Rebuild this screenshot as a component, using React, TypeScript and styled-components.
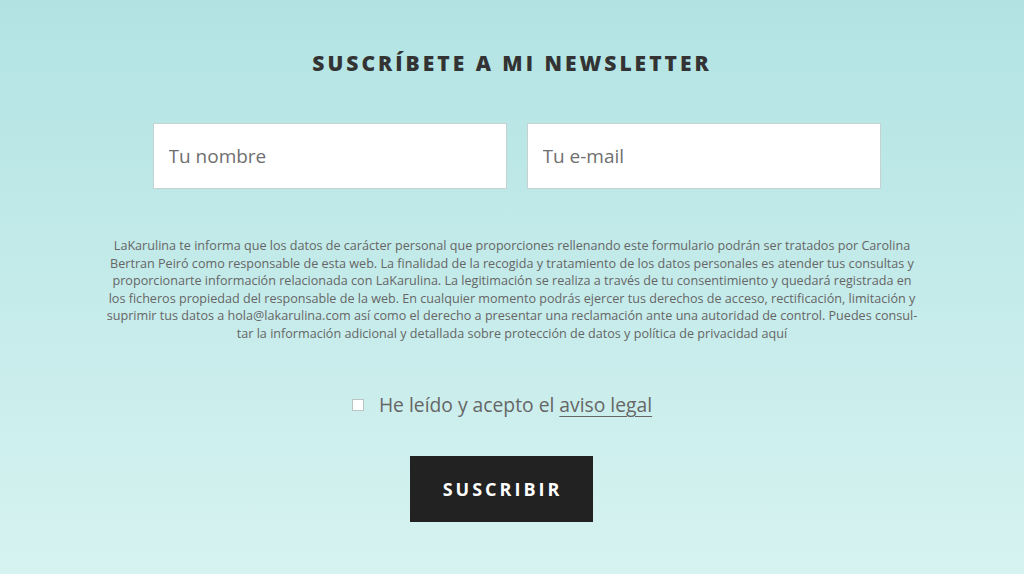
import React from "react";
import styled, { createGlobalStyle } from "styled-components";

const GlobalStyle = createGlobalStyle`
	html, body {
		margin: 0;
		padding: 0;
	}
	body {
		font-family: "Open Sans", "Liberation Sans", sans-serif;
	}
`;

const Page = styled.div`
	width: 1024px;
	height: 574px;
	box-sizing: border-box;
	background: linear-gradient(180deg, #b2e3e3 0%, #d6f3f1 100%);
	display: flex;
	flex-direction: column;
	align-items: center;
	padding-top: 49px;
`;

const Title = styled.h2`
	margin: 0;
	font-family: "Open Sans", "Liberation Sans", sans-serif;
	font-weight: 800;
	font-size: 21px;
	letter-spacing: 3px;
	color: #333;
	line-height: 28px;
`;

const Fields = styled.div`
	display: flex;
	gap: 20px;
	margin-top: 46px;
	margin-left: 9px;
`;

const Input = styled.input`
	width: 354px;
	height: 66px;
	box-sizing: border-box;
	border: 1px solid #c6d2d2;
	background: #fff;
	padding: 0 15px;
	font-family: "Open Sans", "Liberation Sans", sans-serif;
	font-size: 19px;
	color: #555;
	outline: none;
	&::placeholder {
		color: #6f6f6f;
	}
`;

const Legal = styled.p`
	margin: 48px 0 0;
	white-space: nowrap;
	text-align: center;
	font-family: "Open Sans", "Liberation Sans", sans-serif;
	font-size: 12.6px;
	line-height: 17.6px;
	color: #666;
`;

const Consent = styled.label`
	display: flex;
	align-items: center;
	gap: 15px;
	margin-top: 50px;
	margin-right: 20px;
	font-size: 19.3px;
	color: #666;
	line-height: 24px;
`;

const Box = styled.span`
	width: 10px;
	height: 10px;
	border: 1px solid #b9c4c4;
	background: #fff;
`;

const Link = styled.a`
	color: #666;
	text-decoration: underline;
	text-underline-offset: 4px;
	text-decoration-thickness: 1px;
`;

const Button = styled.button`
	margin-top: 39px;
	margin-right: 22px;
	width: 183px;
	height: 66px;
	border: none;
	background: #222;
	color: #fff;
	font-family: "Open Sans", "Liberation Sans", sans-serif;
	font-weight: 700;
	font-size: 18px;
	letter-spacing: 3px;
	padding: 0 0 0 3px;
	cursor: pointer;
`;

const legalLines = [
	"LaKarulina te informa que los datos de carácter personal que proporciones rellenando este formulario podrán ser tratados por Carolina",
	"Bertran Peiró como responsable de esta web. La finalidad de la recogida y tratamiento de los datos personales es atender tus consultas y",
	"proporcionarte información relacionada con LaKarulina. La legitimación se realiza a través de tu consentimiento y quedará registrada en",
	"los ficheros propiedad del responsable de la web. En cualquier momento podrás ejercer tus derechos de acceso, rectificación, limitación y",
	"suprimir tus datos a hola@lakarulina.com así como el derecho a presentar una reclamación ante una autoridad de control. Puedes consul-",
	"tar la información adicional y detallada sobre protección de datos y política de privacidad aquí",
];

const App = () => (
	<>
		<GlobalStyle />
		<Page>
			<Title>SUSCRÍBETE A MI NEWSLETTER</Title>
			<Fields>
				<Input placeholder="Tu nombre" />
				<Input placeholder="Tu e-mail" />
			</Fields>
			<Legal>
				{legalLines.map((line, i) => (
					<React.Fragment key={i}>
						{line}
						{i < legalLines.length - 1 && <br />}
					</React.Fragment>
				))}
			</Legal>
			<Consent>
				<Box />
				<span>
					He leído y acepto el <Link>aviso legal</Link>
				</span>
			</Consent>
			<Button>SUSCRIBIR</Button>
		</Page>
	</>
);

export default App;
